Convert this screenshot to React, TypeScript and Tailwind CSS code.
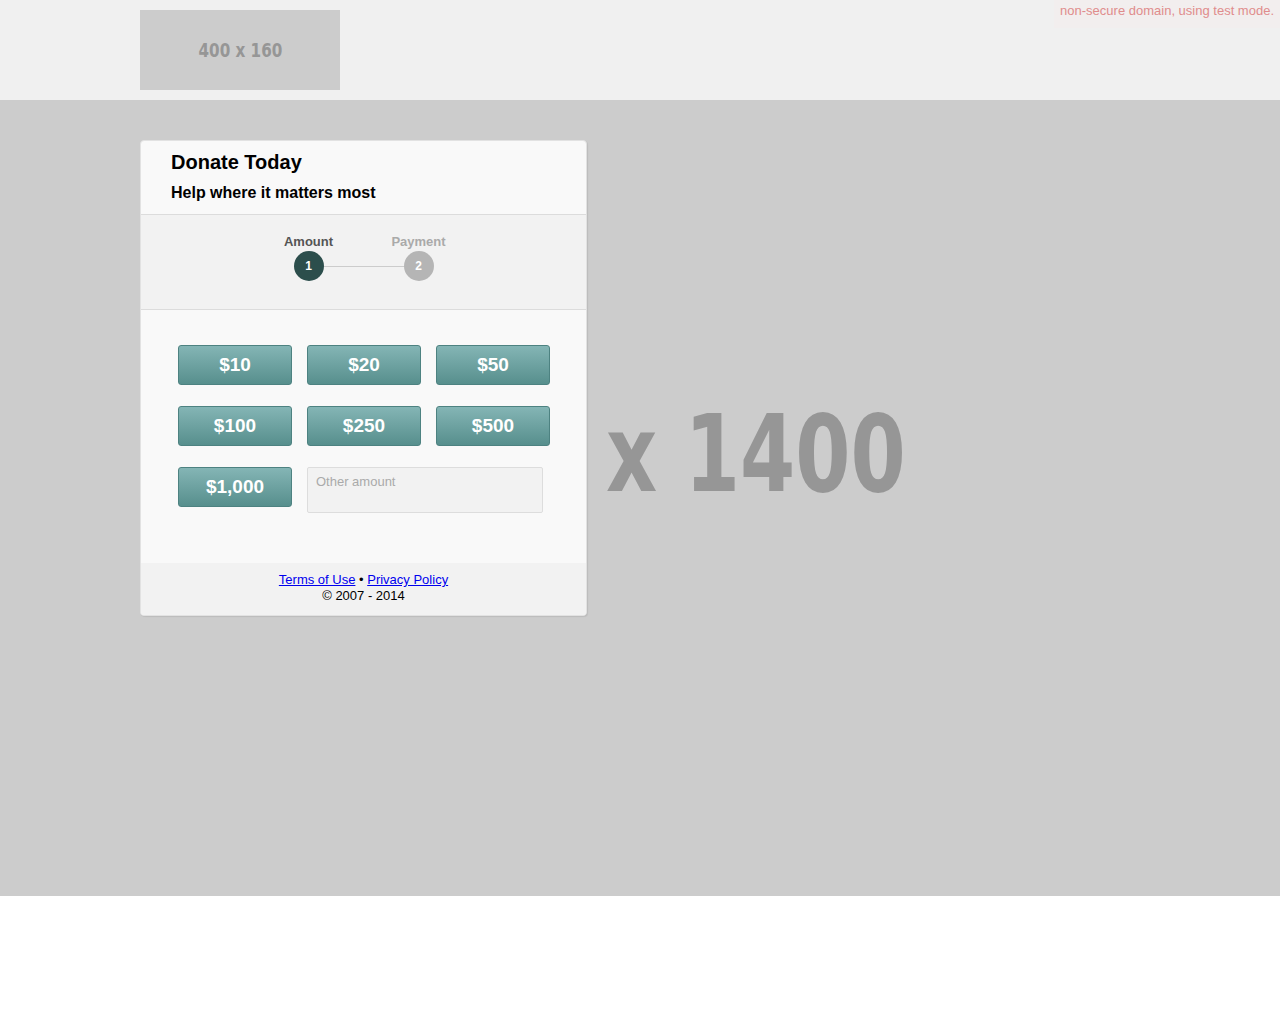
import React from "react";

const AMOUNTS = ["$10", "$20", "$50", "$100", "$250", "$500", "$1,000"];

const sans = "font-['Liberation_Sans',Arial,sans-serif]";
const placeholderFont = "font-['DejaVu_Sans',sans-serif]";

function Step({ label, n, active }: { label: string; n: number; active?: boolean }) {
  return (
    <div className="relative z-10 flex w-[80px] flex-col items-center">
      <span className={`text-[13px] font-bold leading-[16px] ${active ? "text-[#555]" : "text-[#aaa]"}`}>{label}</span>
      <span
        className={`mt-[1px] flex h-[30px] w-[30px] items-center justify-center rounded-full text-[12px] font-bold text-white ${
          active ? "bg-[#2c4e4c]" : "bg-[#b5b5b5]"
        }`}
      >
        {n}
      </span>
    </div>
  );
}

export default function App() {
  return (
    <div className={`min-h-[1024px] bg-white ${sans}`}>
      {/* top bar */}
      <header className="relative h-[100px] bg-[#f0f0f0] pl-[140px] pt-[10px]">
        <div className="flex h-[80px] w-[200px] items-center justify-center bg-[#cccccc]">
          <span className={`scale-x-[0.8] text-[19px] font-bold text-[#969696] ${placeholderFont}`}>400 x 160</span>
        </div>
        <div className="absolute right-0 top-0 bg-[#f2eeee] px-[6px] pt-[1px] pb-[7px] text-[13px] text-[#e08c8c]">
          non-secure domain, using test mode.
        </div>
      </header>

      {/* hero image area */}
      <section className="flex h-[796px] items-start overflow-hidden bg-[#cccccc] pl-[140px] pt-[40px]">
        <div className="w-[447px] shrink-0 overflow-hidden rounded-[4px] border border-[#e2e2e2] bg-[#f9f9f9] shadow-[1px_1px_1px_rgba(0,0,0,0.08)]">
          <div className="border-b border-[#dcdcdc] px-[30px] pt-[9px] pb-[11px]">
            <h1 className="text-[20px] font-bold leading-[24px] text-black">Donate Today</h1>
            <h2 className="mt-[9px] text-[16px] font-bold leading-[20px] text-black">Help where it matters most</h2>
          </div>

          <div className="flex justify-center border-b border-[#dcdcdc] bg-[#f2f2f2] pt-[19px] pb-[28px]">
            <div className="relative flex gap-[30px]">
              <div className="absolute left-[40px] right-[40px] top-[32px] h-px bg-[#cccccc]" />
              <Step label="Amount" n={1} active />
              <Step label="Payment" n={2} />
            </div>
          </div>

          <div className="grid grid-cols-[114px_114px_114px] gap-x-[15px] gap-y-[21px] px-[37px] pt-[35px] pb-[50px]">
            {AMOUNTS.map((a) => (
              <button
                key={a}
                className="h-[40px] rounded-[3px] border border-[#4d8281] bg-gradient-to-b from-[#84b5b5] to-[#578f8d] text-[19px] font-bold text-white"
              >
                {a}
              </button>
            ))}
            <input
              placeholder="Other amount"
              className="col-span-2 h-[46px] w-[236px] rounded-[2px] border border-[#dddddd] bg-[#f2f2f2] px-[8px] pb-[18px] text-[13px] text-black placeholder:text-[#aaaaaa]"
            />
          </div>

          <div className="bg-[#f2f2f2] pt-[9px] pb-[11px] text-center text-[13px] leading-[16px] text-black">
            <div>
              <a href="#" className="text-[#0000ee] underline">Terms of Use</a> •{" "}
              <a href="#" className="text-[#0000ee] underline">Privacy Policy</a>
            </div>
            <div>© 2007 - 2014</div>
          </div>
        </div>

        {/* visible part of the hero placeholder's label */}
        <div
          className={`ml-[19px] mt-[260px] origin-left scale-x-[0.742] whitespace-nowrap text-[107px] font-bold leading-[108px] text-[#969696] ${placeholderFont}`}
        >
          x 1400
        </div>
      </section>
    </div>
  );
}
